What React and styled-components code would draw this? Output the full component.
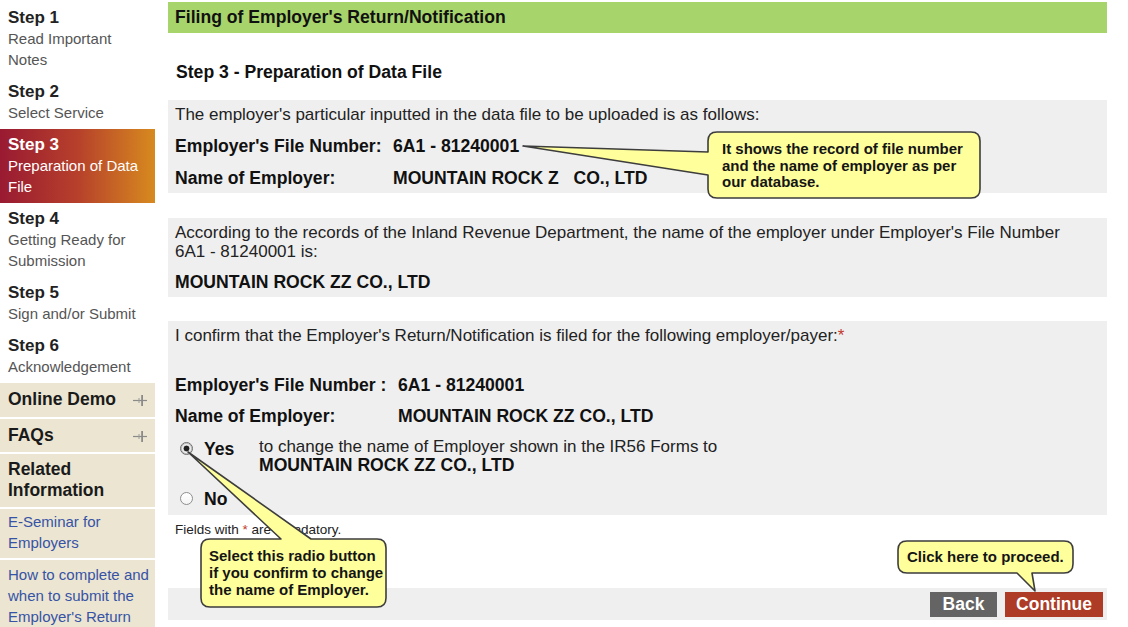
import React from 'react';
import styled, { createGlobalStyle } from 'styled-components';

const Global = createGlobalStyle`
  html, body { margin: 0; padding: 0; overflow: hidden; background: #fff; }
  body { font-family: "Liberation Sans", Arial, sans-serif; color: #222; }
  * { box-sizing: border-box; }
`;

const Page = styled.div`
  position: relative;
  display: flex;
  gap: 13px;
  width: 1128px;
  height: 627px;
  overflow: hidden;
`;

/* ---------- Sidebar ---------- */
const Sidebar = styled.nav`
  width: 155px;
  flex: none;
  padding-top: 2px;
  display: flex;
  flex-direction: column;
`;

const StepItem = styled.div`
  padding: 5px 8px 6px;
  line-height: 21px;
  white-space: nowrap;
  background: ${(p) =>
    p.$active
      ? 'linear-gradient(90deg, #991a32 0%, #b6402b 50%, #d78a1f 100%)'
      : 'transparent'};
  color: ${(p) => (p.$active ? '#fff' : '#555')};
`;

const StepTitle = styled.div`
  font-size: 17px;
  font-weight: bold;
  color: ${(p) => (p.$active ? '#fff' : '#222')};
`;

const StepDesc = styled.div`
  font-size: 15px;
`;

const Extras = styled.div`
  display: flex;
  flex-direction: column;
  gap: 2px;
`;

const ExtraItem = styled.div`
  background: #ebe5d1;
  padding: ${(p) => p.$pad || '6px 8px 7px'};
  line-height: 21px;
  white-space: nowrap;
  display: flex;
  align-items: center;
  justify-content: space-between;
`;

const ExtraTitle = styled.span`
  font-size: 17.5px;
  font-weight: bold;
  color: #1a1a1a;
`;

const ExtraLink = styled.a`
  font-size: 15px;
  color: #3653a6;
  text-decoration: none;
`;

const ExpandIcon = () => (
  <svg width="14" height="12" viewBox="0 0 14 12">
    <line x1="0" y1="6.5" x2="14" y2="6.5" stroke="#8a8a8a" strokeWidth="1.2" />
    <line x1="6" y1="4" x2="6" y2="9" stroke="#9a9a9a" strokeWidth="1" />
    <rect x="8.2" y="1" width="1.8" height="11" fill="#8a8a8a" />
  </svg>
);

/* ---------- Main ---------- */
const Main = styled.main`
  width: 939px;
  flex: none;
  padding-top: 2px;
  display: flex;
  flex-direction: column;
`;

const Banner = styled.h1`
  margin: 0;
  height: 31px;
  line-height: 31px;
  background: #a8d46c;
  padding-left: 7px;
  font-size: 17.6px;
  font-weight: bold;
  color: #111;
`;

const StepHeading = styled.h2`
  margin: 29px 0 0;
  padding-left: 8px;
  font-size: 17.6px;
  line-height: 20px;
  font-weight: bold;
  color: #111;
`;

const Panel = styled.section`
  margin-top: ${(p) => p.$mt}px;
  background: #efefef;
  padding: 5px 7px ${(p) => p.$pb || 5}px;
`;

const Para = styled.p`
  margin: 0;
  font-size: 17px;
  line-height: 19px;
  color: #222;
`;

const Req = styled.span`
  color: #c23a2a;
`;

const Row = styled.div`
  display: flex;
  margin-top: ${(p) => p.$mt || 12}px;
  font-size: 17.6px;
  line-height: 20px;
  font-weight: bold;
  color: #111;
`;

const Label = styled.span`
  width: ${(p) => p.$w}px;
  flex: none;
`;

const Value = styled.span`
  white-space: pre;
`;

const ChoiceRow = styled.div`
  display: grid;
  grid-template-columns: 84px 1fr;
  margin-top: ${(p) => p.$mt}px;
  font-size: 17px;
  line-height: ${(p) => p.$lh || 19}px;
`;

const ChoiceLabel = styled.label`
  display: flex;
  align-items: flex-start;
  gap: 11px;
  padding-left: 5px;
  font-size: 17.6px;
  font-weight: bold;
  color: #111;
`;

const ChoiceText = styled.span`
  margin-top: ${(p) => p.$mt || 0}px;
`;

const Radio = styled.span`
  flex: none;
  width: 13px;
  height: 13px;
  margin-top: ${(p) => p.$mt}px;
  border-radius: 50%;
  border: 1px solid ${(p) => (p.$checked ? '#6d6d6d' : '#8e8e8e')};
  background: ${(p) =>
    p.$checked
      ? 'radial-gradient(circle, #222 0 2.6px, #d9d9d9 3.2px, #fff 4.5px)'
      : 'linear-gradient(#fff, #f4f4f4)'};
  box-shadow: ${(p) => (p.$checked ? 'inset 0 0 0 1px #bdbdbd' : 'none')};
`;

const ChoiceDesc = styled.div`
  color: #222;
`;

const Strong = styled.strong`
  display: block;
  font-size: 17.6px;
  color: #111;
`;

const Note = styled.p`
  margin: 7px 0 0;
  padding-left: 7px;
  font-size: 13.5px;
  line-height: 16px;
  color: #222;
`;

const ActionBar = styled.div`
  margin-top: 50px;
  height: 32px;
  background: #efefef;
  display: flex;
  justify-content: flex-end;
  align-items: center;
  gap: 8px;
  padding-right: 4px;
`;

const Button = styled.button`
  width: ${(p) => p.$w}px;
  height: 25px;
  border: none;
  padding: 0;
  background: ${(p) => p.$bg};
  color: #fff;
  font-family: inherit;
  font-size: 17.5px;
  font-weight: bold;
`;

/* ---------- Callouts ---------- */
const CalloutBox = styled.div`
  position: absolute;
  left: ${(p) => p.$x}px;
  top: ${(p) => p.$y}px;
  width: ${(p) => p.$w}px;
  height: ${(p) => p.$h}px;
`;

const CalloutSvg = styled.svg`
  position: absolute;
  left: 0;
  top: 0;
  overflow: visible;
`;

const CalloutText = styled.div`
  position: relative;
  padding: ${(p) => p.$pad};
  font-size: 15px;
  font-weight: bold;
  white-space: nowrap;
  line-height: ${(p) => p.$lh || 16.5}px;
  color: #151515;
`;

function bubblePath(w, h, r, tail) {
  const { side, a, b, tx, ty } = tail;
  let d = `M ${r} 0 `;
  if (side === 'top') d += `L ${a} 0 L ${tx} ${ty} L ${b} 0 `;
  d += `L ${w - r} 0 Q ${w} 0 ${w} ${r} L ${w} ${h - r} Q ${w} ${h} ${w - r} ${h} `;
  if (side === 'bottom') d += `L ${b} ${h} L ${tx} ${ty} L ${a} ${h} `;
  d += `L ${r} ${h} Q 0 ${h} 0 ${h - r} `;
  if (side === 'left') d += `L 0 ${b} L ${tx} ${ty} L 0 ${a} `;
  d += `L 0 ${r} Q 0 0 ${r} 0 Z`;
  return d;
}

function Callout({ x, y, w, h, tail, pad, lh, children }) {
  return (
    <CalloutBox $x={x} $y={y} $w={w} $h={h}>
      <CalloutSvg width={w} height={h}>
        <path
          d={bubblePath(w, h, 9, tail)}
          fill="#ffff9c"
          stroke="#3d3d3d"
          strokeWidth="1.6"
          strokeLinejoin="round"
        />
      </CalloutSvg>
      <CalloutText $pad={pad} $lh={lh}>{children}</CalloutText>
    </CalloutBox>
  );
}

const steps = [
  { n: 1, lines: ['Read Important', 'Notes'] },
  { n: 2, lines: ['Select Service'] },
  { n: 3, lines: ['Preparation of Data', 'File'], active: true },
  { n: 4, lines: ['Getting Ready for', 'Submission'] },
  { n: 5, lines: ['Sign and/or Submit'] },
  { n: 6, lines: ['Acknowledgement'] },
];

export default function App() {
  return (
    <>
      <Global />
      <Page>
        <Sidebar>
          {steps.map((s) => (
            <StepItem key={s.n} $active={s.active}>
              <StepTitle $active={s.active}>Step {s.n}</StepTitle>
              {s.lines.map((l) => (
                <StepDesc key={l}>{l}</StepDesc>
              ))}
            </StepItem>
          ))}
          <Extras>
            <ExtraItem>
              <ExtraTitle>Online Demo</ExtraTitle>
              <ExpandIcon />
            </ExtraItem>
            <ExtraItem $pad="6px 8px 6px">
              <ExtraTitle>FAQs</ExtraTitle>
              <ExpandIcon />
            </ExtraItem>
            <ExtraItem $pad="5px 8px 6px">
              <ExtraTitle>
                Related
                <br />
                Information
              </ExtraTitle>
            </ExtraItem>
            <ExtraItem $pad="2px 8px 5px">
              <ExtraLink href="#">
                E-Seminar for
                <br />
                Employers
              </ExtraLink>
            </ExtraItem>
            <ExtraItem $pad="4px 8px 6px">
              <ExtraLink href="#">
                How to complete and
                <br />
                when to submit the
                <br />
                Employer's Return
              </ExtraLink>
            </ExtraItem>
          </Extras>
        </Sidebar>

        <Main>
          <Banner>Filing of Employer's Return/Notification</Banner>
          <StepHeading>Step 3 - Preparation of Data File</StepHeading>

          <Panel $mt={18}>
            <Para>The employer's particular inputted in the data file to be uploaded is as follows:</Para>
            <Row>
              <Label $w={218}>Employer's File Number:</Label>
              <Value>6A1 - 81240001</Value>
            </Row>
            <Row>
              <Label $w={218}>Name of Employer:</Label>
              <Value>{'MOUNTAIN ROCK Z   CO., LTD'}</Value>
            </Row>
          </Panel>

          <Panel $mt={25}>
            <Para>
              According to the records of the Inland Revenue Department, the name of the employer under Employer's File Number
              <br />
              6A1 - 81240001 is:
            </Para>
            <Row $mt={11}>
              <Value>MOUNTAIN ROCK ZZ CO., LTD</Value>
            </Row>
          </Panel>

          <Panel $mt={24} $pb={6}>
            <Para>
              I confirm that the Employer's Return/Notification is filed for the following employer/payer:<Req>*</Req>
            </Para>
            <Row $mt={30}>
              <Label $w={223}>Employer's File Number :</Label>
              <Value>6A1 - 81240001</Value>
            </Row>
            <Row $mt={11}>
              <Label $w={223}>Name of Employer:</Label>
              <Value>MOUNTAIN ROCK ZZ CO., LTD</Value>
            </Row>
            <ChoiceRow $mt={11}>
              <ChoiceLabel>
                <Radio $checked $mt={5} />
                <ChoiceText $mt={3}>Yes</ChoiceText>
              </ChoiceLabel>
              <ChoiceDesc>
                to change the name of Employer shown in the IR56 Forms to
                <Strong>MOUNTAIN ROCK ZZ CO., LTD</Strong>
              </ChoiceDesc>
            </ChoiceRow>
            <ChoiceRow $mt={14} $lh={20}>
              <ChoiceLabel>
                <Radio $mt={3} />
                <ChoiceText>No</ChoiceText>
              </ChoiceLabel>
            </ChoiceRow>
          </Panel>

          <Note>
            Fields with <Req>*</Req> are mandatory.
          </Note>

          <ActionBar>
            <Button $w={67} $bg="#646464">Back</Button>
            <Button $w={98} $bg="#ad3b26">Continue</Button>
          </ActionBar>
        </Main>

        <Callout
          x={708}
          y={132}
          w={272}
          h={66}
          pad="9px 10px 0 14px"
          tail={{ side: 'left', a: 20, b: 43, tx: -185, ty: 14 }}
        >
          It shows the record of file number
          <br />
          and the name of employer as per
          <br />
          our database.
        </Callout>

        <Callout
          x={201}
          y={539}
          w={185}
          h={68}
          pad="8px 4px 0 8px"
          lh={17}
          tail={{ side: 'top', a: 80, b: 110, tx: -13, ty: -87 }}
        >
          Select this radio button
          <br />
          if you confirm to change
          <br />
          the name of Employer.
        </Callout>

        <Callout
          x={898}
          y={541}
          w={175}
          h={32}
          pad="7px 4px 0 9px"
          lh={17}
          tail={{ side: 'bottom', a: 119, b: 134, tx: 137, ty: 50 }}
        >
          Click here to proceed.
        </Callout>
      </Page>
    </>
  );
}
